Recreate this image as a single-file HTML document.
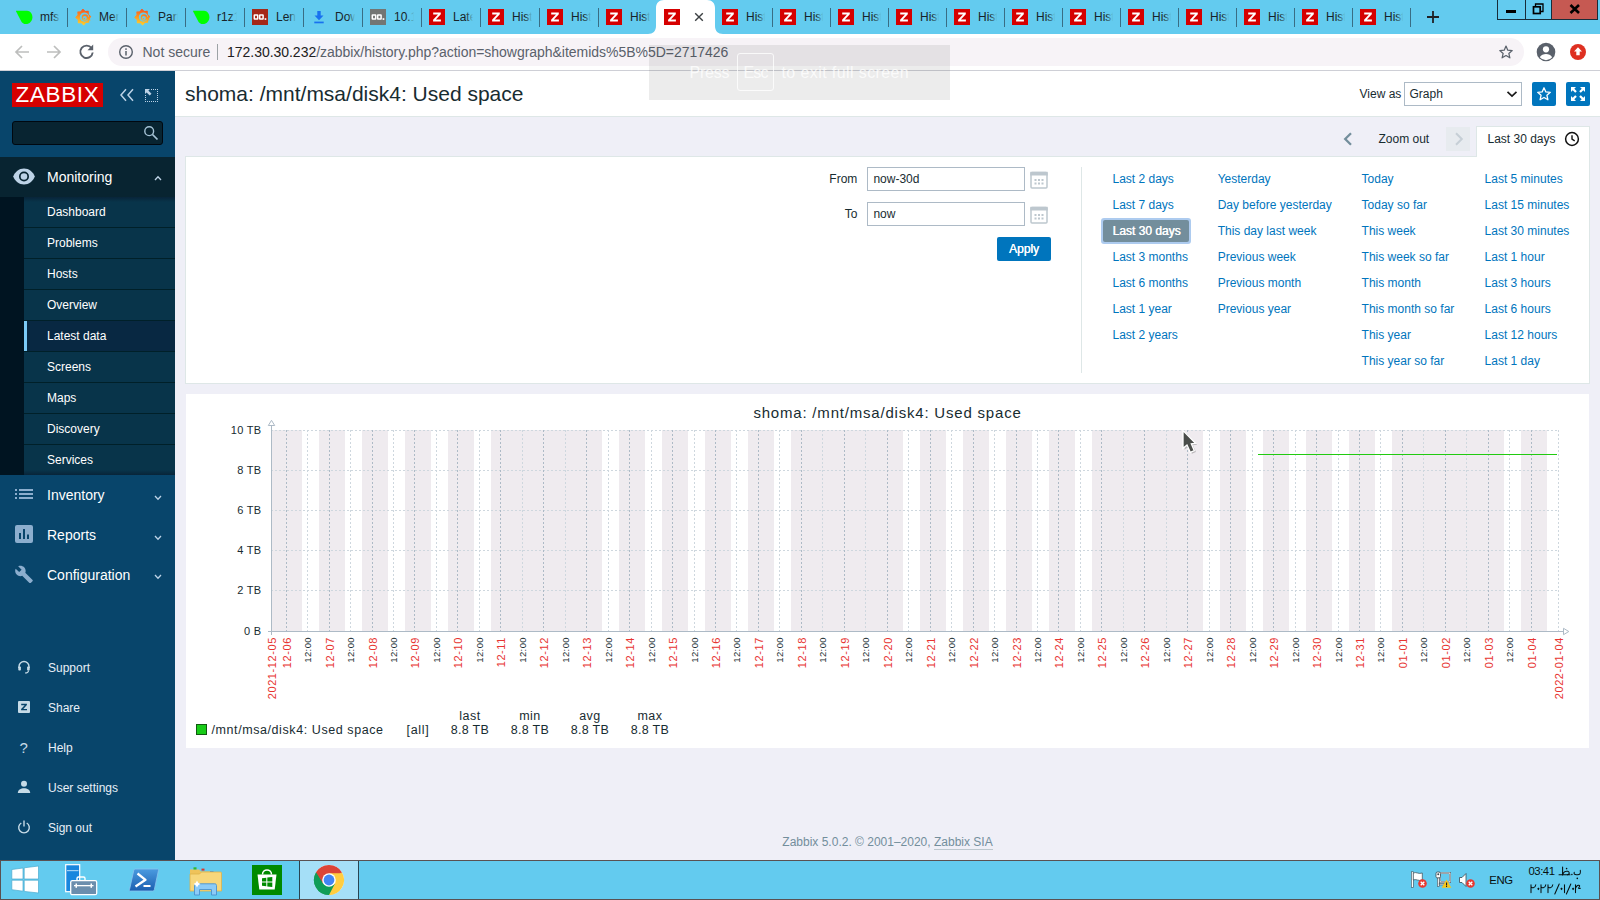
<!DOCTYPE html><html><head><meta charset="utf-8"><title>History [refreshed every 30 sec.]</title><style>html,body{margin:0;padding:0;width:1600px;height:900px;overflow:hidden;background:#fff;}body{font-family:"Liberation Sans",sans-serif;position:relative;}div,svg{position:absolute;}span{position:static;}</style></head><body><div style="left:175px;top:71px;width:1425px;height:789px;background:#EFEFF7"></div><div style="left:175px;top:71px;width:1425px;height:45px;background:#fff"></div><div style="left:175px;top:116px;width:1425px;height:1px;background:#DEE7E7"></div><div style="left:185px;top:79.82px;font-size:21px;line-height:27px;color:#182C31;font-weight:400;white-space:pre;">shoma: /mnt/msa/disk4: Used space</div><div style="left:1359.5px;top:85.54px;font-size:12px;line-height:16px;color:#182C31;font-weight:400;white-space:pre;">View as</div><div style="left:1404px;top:82px;width:118px;height:24px;background:#fff;border:1px solid #ADBAC6;box-sizing:border-box"></div><div style="left:1409.5px;top:85.54px;font-size:12px;line-height:16px;color:#182C31;font-weight:400;white-space:pre;">Graph</div><svg style="left:1506px;top:90px" width="12" height="8" viewBox="0 0 12 8"><path d="M1.500 1.800L6 6l4.500-4.200" fill="none" stroke="#1a1a1a" stroke-width="1.700"/></svg><div style="left:1532px;top:82px;width:24px;height:24px;background:#0075BD;border-radius:2px"></div><svg style="left:1536px;top:86px" width="16" height="16" viewBox="0 0 16 16"><path d="M8 1.800l1.850 4.100 4.450.45-3.350 3 .95 4.400L8 11.500l-3.900 2.250.95-4.400-3.350-3 4.450-.45z" fill="none" stroke="#fff" stroke-width="1.300" stroke-linejoin="round"/></svg><div style="left:1566px;top:82px;width:24px;height:24px;background:#0075BD;border-radius:2px"></div><svg style="left:1570px;top:86px" width="16" height="16" viewBox="0 0 16 16"><g fill="#fff"><path d="M1 1h5L4.300 2.700 6.800 5.200 5.200 6.800 2.700 4.300 1 6z"/><path d="M15 1v5l-1.700-1.700-2.500 2.500-1.600-1.600 2.500-2.500L10 1z"/><path d="M1 15v-5l1.700 1.700 2.500-2.500 1.600 1.600-2.500 2.500L6 15z"/><path d="M15 15h-5l1.700-1.700-2.500-2.500 1.600-1.600 2.500 2.500L15 10z"/></g></svg><svg style="left:1343px;top:132px" width="10" height="14" viewBox="0 0 10 14"><path d="M8 1.200L2.200 7 8 12.800" fill="none" stroke="#738E9C" stroke-width="2.300"/></svg><div style="left:1378.5px;top:130.54px;font-size:12px;line-height:16px;color:#182C31;font-weight:400;white-space:pre;">Zoom out</div><div style="left:1446px;top:127px;width:24px;height:24px;background:#E7EBEF"></div><svg style="left:1454px;top:132px" width="10" height="14" viewBox="0 0 10 14"><path d="M2 1.200L7.800 7 2 12.800" fill="none" stroke="#C6CFD6" stroke-width="2"/></svg><div style="left:1476px;top:126px;width:114px;height:32px;background:#fff;border:1px solid #DEE7E7;border-bottom:none;box-sizing:border-box"></div><div style="left:1487.5px;top:130.54px;font-size:12px;line-height:16px;color:#182C31;font-weight:400;white-space:pre;">Last 30 days</div><svg style="left:1564px;top:131px" width="16" height="16" viewBox="0 0 16 16"><circle cx="8" cy="8" r="6.400" fill="none" stroke="#111" stroke-width="1.500"/><path d="M8 4.200V8.200l2.700 1.700" fill="none" stroke="#111" stroke-width="1.400"/></svg><div style="left:185px;top:156px;width:1405px;height:228px;background:#fff;border:1px solid #DEE7E7;box-sizing:border-box"></div><div style="left:1477px;top:156px;width:112px;height:1px;background:#fff"></div><div style="right:742.7px;top:170.64px;font-size:12px;line-height:16px;color:#182C31;font-weight:400;white-space:pre;">From</div><div style="right:742.7px;top:206.24px;font-size:12px;line-height:16px;color:#182C31;font-weight:400;white-space:pre;">To</div><div style="left:867px;top:167px;width:158px;height:24px;background:#fff;border:1px solid #ADBAC6;box-sizing:border-box"></div><div style="left:873.4px;top:170.64px;font-size:12px;line-height:16px;color:#182C31;font-weight:400;white-space:pre;">now-30d</div><svg style="left:1030px;top:171px" width="18" height="18" viewBox="0 0 18 18"><rect x="1" y="1.500" width="16" height="15.500" rx="1" fill="#fff" stroke="#BDC7CE" stroke-width="1.500"/><rect x="0.300" y="0.800" width="17.400" height="3.700" fill="#BDC7CE"/><g fill="#BDC7CE"><rect x="4.500" y="8" width="2" height="2"/><rect x="8" y="8" width="2" height="2"/><rect x="11.500" y="8" width="2" height="2"/><rect x="4.500" y="11.500" width="2" height="2"/><rect x="8" y="11.500" width="2" height="2"/><rect x="11.500" y="11.500" width="2" height="2"/></g></svg><div style="left:867px;top:202px;width:158px;height:24px;background:#fff;border:1px solid #ADBAC6;box-sizing:border-box"></div><div style="left:873.4px;top:205.64px;font-size:12px;line-height:16px;color:#182C31;font-weight:400;white-space:pre;">now</div><svg style="left:1030px;top:206px" width="18" height="18" viewBox="0 0 18 18"><rect x="1" y="1.500" width="16" height="15.500" rx="1" fill="#fff" stroke="#BDC7CE" stroke-width="1.500"/><rect x="0.300" y="0.800" width="17.400" height="3.700" fill="#BDC7CE"/><g fill="#BDC7CE"><rect x="4.500" y="8" width="2" height="2"/><rect x="8" y="8" width="2" height="2"/><rect x="11.500" y="8" width="2" height="2"/><rect x="4.500" y="11.500" width="2" height="2"/><rect x="8" y="11.500" width="2" height="2"/><rect x="11.500" y="11.500" width="2" height="2"/></g></svg><div style="left:997px;top:237px;width:54px;height:24px;background:#0075BD;border-radius:2px"></div><div style="left:524px;width:1000px;text-align:center;top:240.64px;font-size:12px;line-height:16px;color:#fff;font-weight:400;white-space:pre;text-shadow:0.300px 0 0 #fff">Apply</div><div style="left:1081px;top:167px;width:1px;height:206px;background:#DEE7E7"></div><div style="left:1112.5px;top:170.84px;font-size:12px;line-height:16px;color:#0075BD;font-weight:400;white-space:pre;">Last 2 days</div><div style="left:1112.5px;top:196.84px;font-size:12px;line-height:16px;color:#0075BD;font-weight:400;white-space:pre;">Last 7 days</div><div style="left:1101px;top:218px;width:90px;height:26px;background:#ADCBEF;border-radius:3px"></div><div style="left:1103px;top:220px;width:86px;height:22px;background:#738E9C;border-radius:2px"></div><div style="left:1112.5px;top:222.84px;font-size:12px;line-height:16px;color:#fff;font-weight:400;white-space:pre;text-shadow:0.400px 0 0 #fff">Last 30 days</div><div style="left:1112.5px;top:248.84px;font-size:12px;line-height:16px;color:#0075BD;font-weight:400;white-space:pre;">Last 3 months</div><div style="left:1112.5px;top:274.84px;font-size:12px;line-height:16px;color:#0075BD;font-weight:400;white-space:pre;">Last 6 months</div><div style="left:1112.5px;top:300.84px;font-size:12px;line-height:16px;color:#0075BD;font-weight:400;white-space:pre;">Last 1 year</div><div style="left:1112.5px;top:326.84px;font-size:12px;line-height:16px;color:#0075BD;font-weight:400;white-space:pre;">Last 2 years</div><div style="left:1217.7px;top:170.84px;font-size:12px;line-height:16px;color:#0075BD;font-weight:400;white-space:pre;">Yesterday</div><div style="left:1217.7px;top:196.84px;font-size:12px;line-height:16px;color:#0075BD;font-weight:400;white-space:pre;">Day before yesterday</div><div style="left:1217.7px;top:222.84px;font-size:12px;line-height:16px;color:#0075BD;font-weight:400;white-space:pre;">This day last week</div><div style="left:1217.7px;top:248.84px;font-size:12px;line-height:16px;color:#0075BD;font-weight:400;white-space:pre;">Previous week</div><div style="left:1217.7px;top:274.84px;font-size:12px;line-height:16px;color:#0075BD;font-weight:400;white-space:pre;">Previous month</div><div style="left:1217.7px;top:300.84px;font-size:12px;line-height:16px;color:#0075BD;font-weight:400;white-space:pre;">Previous year</div><div style="left:1361.6px;top:170.84px;font-size:12px;line-height:16px;color:#0075BD;font-weight:400;white-space:pre;">Today</div><div style="left:1361.6px;top:196.84px;font-size:12px;line-height:16px;color:#0075BD;font-weight:400;white-space:pre;">Today so far</div><div style="left:1361.6px;top:222.84px;font-size:12px;line-height:16px;color:#0075BD;font-weight:400;white-space:pre;">This week</div><div style="left:1361.6px;top:248.84px;font-size:12px;line-height:16px;color:#0075BD;font-weight:400;white-space:pre;">This week so far</div><div style="left:1361.6px;top:274.84px;font-size:12px;line-height:16px;color:#0075BD;font-weight:400;white-space:pre;">This month</div><div style="left:1361.6px;top:300.84px;font-size:12px;line-height:16px;color:#0075BD;font-weight:400;white-space:pre;">This month so far</div><div style="left:1361.6px;top:326.84px;font-size:12px;line-height:16px;color:#0075BD;font-weight:400;white-space:pre;">This year</div><div style="left:1361.6px;top:352.84px;font-size:12px;line-height:16px;color:#0075BD;font-weight:400;white-space:pre;">This year so far</div><div style="left:1484.6px;top:170.84px;font-size:12px;line-height:16px;color:#0075BD;font-weight:400;white-space:pre;">Last 5 minutes</div><div style="left:1484.6px;top:196.84px;font-size:12px;line-height:16px;color:#0075BD;font-weight:400;white-space:pre;">Last 15 minutes</div><div style="left:1484.6px;top:222.84px;font-size:12px;line-height:16px;color:#0075BD;font-weight:400;white-space:pre;">Last 30 minutes</div><div style="left:1484.6px;top:248.84px;font-size:12px;line-height:16px;color:#0075BD;font-weight:400;white-space:pre;">Last 1 hour</div><div style="left:1484.6px;top:274.84px;font-size:12px;line-height:16px;color:#0075BD;font-weight:400;white-space:pre;">Last 3 hours</div><div style="left:1484.6px;top:300.84px;font-size:12px;line-height:16px;color:#0075BD;font-weight:400;white-space:pre;">Last 6 hours</div><div style="left:1484.6px;top:326.84px;font-size:12px;line-height:16px;color:#0075BD;font-weight:400;white-space:pre;">Last 12 hours</div><div style="left:1484.6px;top:352.84px;font-size:12px;line-height:16px;color:#0075BD;font-weight:400;white-space:pre;">Last 1 day</div><div style="left:186px;top:394px;width:1403px;height:354px;background:#fff"></div><svg style="left:0;top:0" width="1600" height="900" viewBox="0 0 1600 900" shape-rendering="crispEdges"><rect x="272" y="430" width="1287" height="201" fill="#EFEBEF"/><rect x="302" y="430" width="17" height="201" fill="#fff"/><rect x="345" y="430" width="17" height="201" fill="#fff"/><rect x="388" y="430" width="17" height="201" fill="#fff"/><rect x="431" y="430" width="17" height="201" fill="#fff"/><rect x="474" y="430" width="17" height="201" fill="#fff"/><rect x="602" y="430" width="17" height="201" fill="#fff"/><rect x="645" y="430" width="17" height="201" fill="#fff"/><rect x="688" y="430" width="17" height="201" fill="#fff"/><rect x="731" y="430" width="17" height="201" fill="#fff"/><rect x="774" y="430" width="17" height="201" fill="#fff"/><rect x="903" y="430" width="17" height="201" fill="#fff"/><rect x="946" y="430" width="17" height="201" fill="#fff"/><rect x="989" y="430" width="17" height="201" fill="#fff"/><rect x="1032" y="430" width="17" height="201" fill="#fff"/><rect x="1075" y="430" width="17" height="201" fill="#fff"/><rect x="1203" y="430" width="17" height="201" fill="#fff"/><rect x="1246" y="430" width="17" height="201" fill="#fff"/><rect x="1289" y="430" width="17" height="201" fill="#fff"/><rect x="1332" y="430" width="17" height="201" fill="#fff"/><rect x="1375" y="430" width="17" height="201" fill="#fff"/><rect x="1504" y="430" width="17" height="201" fill="#fff"/><rect x="1547" y="430" width="12" height="201" fill="#fff"/><path d="M271 430.5H1559" stroke="#CED7DE" stroke-dasharray="2 2"/><path d="M271 470.5H1559" stroke="#CED7DE" stroke-dasharray="2 2"/><path d="M271 510.5H1559" stroke="#CED7DE" stroke-dasharray="2 2"/><path d="M271 550.5H1559" stroke="#CED7DE" stroke-dasharray="2 2"/><path d="M271 590.5H1559" stroke="#CED7DE" stroke-dasharray="2 2"/><path d="M286.5 430V631" stroke="#ADBAC6" stroke-dasharray="2 2"/><path d="M307.5 430V631" stroke="#CED7DE" stroke-dasharray="2 2"/><path d="M329.5 430V631" stroke="#ADBAC6" stroke-dasharray="2 2"/><path d="M350.5 430V631" stroke="#CED7DE" stroke-dasharray="2 2"/><path d="M372.5 430V631" stroke="#ADBAC6" stroke-dasharray="2 2"/><path d="M393.5 430V631" stroke="#CED7DE" stroke-dasharray="2 2"/><path d="M414.5 430V631" stroke="#ADBAC6" stroke-dasharray="2 2"/><path d="M436.5 430V631" stroke="#CED7DE" stroke-dasharray="2 2"/><path d="M457.5 430V631" stroke="#ADBAC6" stroke-dasharray="2 2"/><path d="M479.5 430V631" stroke="#CED7DE" stroke-dasharray="2 2"/><path d="M500.5 430V631" stroke="#ADBAC6" stroke-dasharray="2 2"/><path d="M522.5 430V631" stroke="#CED7DE" stroke-dasharray="2 2"/><path d="M543.5 430V631" stroke="#ADBAC6" stroke-dasharray="2 2"/><path d="M565.5 430V631" stroke="#CED7DE" stroke-dasharray="2 2"/><path d="M586.5 430V631" stroke="#ADBAC6" stroke-dasharray="2 2"/><path d="M608.5 430V631" stroke="#CED7DE" stroke-dasharray="2 2"/><path d="M629.5 430V631" stroke="#ADBAC6" stroke-dasharray="2 2"/><path d="M651.5 430V631" stroke="#CED7DE" stroke-dasharray="2 2"/><path d="M672.5 430V631" stroke="#ADBAC6" stroke-dasharray="2 2"/><path d="M694.5 430V631" stroke="#CED7DE" stroke-dasharray="2 2"/><path d="M715.5 430V631" stroke="#ADBAC6" stroke-dasharray="2 2"/><path d="M736.5 430V631" stroke="#CED7DE" stroke-dasharray="2 2"/><path d="M758.5 430V631" stroke="#ADBAC6" stroke-dasharray="2 2"/><path d="M779.5 430V631" stroke="#CED7DE" stroke-dasharray="2 2"/><path d="M801.5 430V631" stroke="#ADBAC6" stroke-dasharray="2 2"/><path d="M822.5 430V631" stroke="#CED7DE" stroke-dasharray="2 2"/><path d="M844.5 430V631" stroke="#ADBAC6" stroke-dasharray="2 2"/><path d="M865.5 430V631" stroke="#CED7DE" stroke-dasharray="2 2"/><path d="M887.5 430V631" stroke="#ADBAC6" stroke-dasharray="2 2"/><path d="M908.5 430V631" stroke="#CED7DE" stroke-dasharray="2 2"/><path d="M930.5 430V631" stroke="#ADBAC6" stroke-dasharray="2 2"/><path d="M951.5 430V631" stroke="#CED7DE" stroke-dasharray="2 2"/><path d="M973.5 430V631" stroke="#ADBAC6" stroke-dasharray="2 2"/><path d="M994.5 430V631" stroke="#CED7DE" stroke-dasharray="2 2"/><path d="M1016.5 430V631" stroke="#ADBAC6" stroke-dasharray="2 2"/><path d="M1037.5 430V631" stroke="#CED7DE" stroke-dasharray="2 2"/><path d="M1058.5 430V631" stroke="#ADBAC6" stroke-dasharray="2 2"/><path d="M1080.5 430V631" stroke="#CED7DE" stroke-dasharray="2 2"/><path d="M1101.5 430V631" stroke="#ADBAC6" stroke-dasharray="2 2"/><path d="M1123.5 430V631" stroke="#CED7DE" stroke-dasharray="2 2"/><path d="M1144.5 430V631" stroke="#ADBAC6" stroke-dasharray="2 2"/><path d="M1166.5 430V631" stroke="#CED7DE" stroke-dasharray="2 2"/><path d="M1187.5 430V631" stroke="#ADBAC6" stroke-dasharray="2 2"/><path d="M1209.5 430V631" stroke="#CED7DE" stroke-dasharray="2 2"/><path d="M1230.5 430V631" stroke="#ADBAC6" stroke-dasharray="2 2"/><path d="M1252.5 430V631" stroke="#CED7DE" stroke-dasharray="2 2"/><path d="M1273.5 430V631" stroke="#ADBAC6" stroke-dasharray="2 2"/><path d="M1295.5 430V631" stroke="#CED7DE" stroke-dasharray="2 2"/><path d="M1316.5 430V631" stroke="#ADBAC6" stroke-dasharray="2 2"/><path d="M1338.5 430V631" stroke="#CED7DE" stroke-dasharray="2 2"/><path d="M1359.5 430V631" stroke="#ADBAC6" stroke-dasharray="2 2"/><path d="M1380.5 430V631" stroke="#CED7DE" stroke-dasharray="2 2"/><path d="M1402.5 430V631" stroke="#ADBAC6" stroke-dasharray="2 2"/><path d="M1423.5 430V631" stroke="#CED7DE" stroke-dasharray="2 2"/><path d="M1445.5 430V631" stroke="#ADBAC6" stroke-dasharray="2 2"/><path d="M1466.5 430V631" stroke="#CED7DE" stroke-dasharray="2 2"/><path d="M1488.5 430V631" stroke="#ADBAC6" stroke-dasharray="2 2"/><path d="M1509.5 430V631" stroke="#CED7DE" stroke-dasharray="2 2"/><path d="M1531.5 430V631" stroke="#ADBAC6" stroke-dasharray="2 2"/><path d="M1558.5 430V631" stroke="#CED7DE" stroke-dasharray="2 2"/><path d="M271.500 425V635" stroke="#ADBAC6"/><path d="M268 631.500H1563" stroke="#ADBAC6"/><path d="M268.300 425.500L271.500 420.300L274.700 425.500z" fill="#fff" stroke="#ADBAC6" shape-rendering="geometricPrecision"/><path d="M1563.500 628.300L1568.800 631.500L1563.500 634.700z" fill="#fff" stroke="#ADBAC6" shape-rendering="geometricPrecision"/><path d="M1258 454.500H1557" stroke="#21CB10" stroke-width="1.700"/></svg><div style="left:387.5px;width:1000px;text-align:center;top:403.00px;font-size:15px;line-height:20px;color:#182C31;font-weight:400;white-space:pre;letter-spacing:0.800px">shoma: /mnt/msa/disk4: Used space</div><div style="right:1338.5px;top:423.19px;font-size:11px;line-height:14px;color:#182C31;font-weight:400;white-space:pre;letter-spacing:0.300px">10 TB</div><div style="right:1338.5px;top:463.19px;font-size:11px;line-height:14px;color:#182C31;font-weight:400;white-space:pre;letter-spacing:0.300px">8 TB</div><div style="right:1338.5px;top:503.19px;font-size:11px;line-height:14px;color:#182C31;font-weight:400;white-space:pre;letter-spacing:0.300px">6 TB</div><div style="right:1338.5px;top:543.19px;font-size:11px;line-height:14px;color:#182C31;font-weight:400;white-space:pre;letter-spacing:0.300px">4 TB</div><div style="right:1338.5px;top:583.19px;font-size:11px;line-height:14px;color:#182C31;font-weight:400;white-space:pre;letter-spacing:0.300px">2 TB</div><div style="right:1338.5px;top:623.69px;font-size:11px;line-height:14px;color:#182C31;font-weight:400;white-space:pre;letter-spacing:0.300px">0 B</div><div style="left:271.5px;top:637px;width:0;height:0;transform:rotate(-90deg);"><div style="right:0;top:-7.15px;font-size:11px;line-height:14.30px;color:#E73431;white-space:pre;letter-spacing:0.6px">2021-12-05</div></div><div style="left:286.5px;top:637px;width:0;height:0;transform:rotate(-90deg);"><div style="right:0;top:-7.15px;font-size:11px;line-height:14.30px;color:#E73431;white-space:pre;letter-spacing:0.6px">12-06</div></div><div style="left:307.5px;top:637px;width:0;height:0;transform:rotate(-90deg);"><div style="right:0;top:-6.17px;font-size:9.5px;line-height:12.35px;color:#182C31;white-space:pre;letter-spacing:0.4px">12:00</div></div><div style="left:329.5px;top:637px;width:0;height:0;transform:rotate(-90deg);"><div style="right:0;top:-7.15px;font-size:11px;line-height:14.30px;color:#E73431;white-space:pre;letter-spacing:0.6px">12-07</div></div><div style="left:350.5px;top:637px;width:0;height:0;transform:rotate(-90deg);"><div style="right:0;top:-6.17px;font-size:9.5px;line-height:12.35px;color:#182C31;white-space:pre;letter-spacing:0.4px">12:00</div></div><div style="left:372.5px;top:637px;width:0;height:0;transform:rotate(-90deg);"><div style="right:0;top:-7.15px;font-size:11px;line-height:14.30px;color:#E73431;white-space:pre;letter-spacing:0.6px">12-08</div></div><div style="left:393.5px;top:637px;width:0;height:0;transform:rotate(-90deg);"><div style="right:0;top:-6.17px;font-size:9.5px;line-height:12.35px;color:#182C31;white-space:pre;letter-spacing:0.4px">12:00</div></div><div style="left:414.5px;top:637px;width:0;height:0;transform:rotate(-90deg);"><div style="right:0;top:-7.15px;font-size:11px;line-height:14.30px;color:#E73431;white-space:pre;letter-spacing:0.6px">12-09</div></div><div style="left:436.5px;top:637px;width:0;height:0;transform:rotate(-90deg);"><div style="right:0;top:-6.17px;font-size:9.5px;line-height:12.35px;color:#182C31;white-space:pre;letter-spacing:0.4px">12:00</div></div><div style="left:457.5px;top:637px;width:0;height:0;transform:rotate(-90deg);"><div style="right:0;top:-7.15px;font-size:11px;line-height:14.30px;color:#E73431;white-space:pre;letter-spacing:0.6px">12-10</div></div><div style="left:479.5px;top:637px;width:0;height:0;transform:rotate(-90deg);"><div style="right:0;top:-6.17px;font-size:9.5px;line-height:12.35px;color:#182C31;white-space:pre;letter-spacing:0.4px">12:00</div></div><div style="left:500.5px;top:637px;width:0;height:0;transform:rotate(-90deg);"><div style="right:0;top:-7.15px;font-size:11px;line-height:14.30px;color:#E73431;white-space:pre;letter-spacing:0.6px">12-11</div></div><div style="left:522.5px;top:637px;width:0;height:0;transform:rotate(-90deg);"><div style="right:0;top:-6.17px;font-size:9.5px;line-height:12.35px;color:#182C31;white-space:pre;letter-spacing:0.4px">12:00</div></div><div style="left:543.5px;top:637px;width:0;height:0;transform:rotate(-90deg);"><div style="right:0;top:-7.15px;font-size:11px;line-height:14.30px;color:#E73431;white-space:pre;letter-spacing:0.6px">12-12</div></div><div style="left:565.5px;top:637px;width:0;height:0;transform:rotate(-90deg);"><div style="right:0;top:-6.17px;font-size:9.5px;line-height:12.35px;color:#182C31;white-space:pre;letter-spacing:0.4px">12:00</div></div><div style="left:586.5px;top:637px;width:0;height:0;transform:rotate(-90deg);"><div style="right:0;top:-7.15px;font-size:11px;line-height:14.30px;color:#E73431;white-space:pre;letter-spacing:0.6px">12-13</div></div><div style="left:608.5px;top:637px;width:0;height:0;transform:rotate(-90deg);"><div style="right:0;top:-6.17px;font-size:9.5px;line-height:12.35px;color:#182C31;white-space:pre;letter-spacing:0.4px">12:00</div></div><div style="left:629.5px;top:637px;width:0;height:0;transform:rotate(-90deg);"><div style="right:0;top:-7.15px;font-size:11px;line-height:14.30px;color:#E73431;white-space:pre;letter-spacing:0.6px">12-14</div></div><div style="left:651.5px;top:637px;width:0;height:0;transform:rotate(-90deg);"><div style="right:0;top:-6.17px;font-size:9.5px;line-height:12.35px;color:#182C31;white-space:pre;letter-spacing:0.4px">12:00</div></div><div style="left:672.5px;top:637px;width:0;height:0;transform:rotate(-90deg);"><div style="right:0;top:-7.15px;font-size:11px;line-height:14.30px;color:#E73431;white-space:pre;letter-spacing:0.6px">12-15</div></div><div style="left:694.5px;top:637px;width:0;height:0;transform:rotate(-90deg);"><div style="right:0;top:-6.17px;font-size:9.5px;line-height:12.35px;color:#182C31;white-space:pre;letter-spacing:0.4px">12:00</div></div><div style="left:715.5px;top:637px;width:0;height:0;transform:rotate(-90deg);"><div style="right:0;top:-7.15px;font-size:11px;line-height:14.30px;color:#E73431;white-space:pre;letter-spacing:0.6px">12-16</div></div><div style="left:736.5px;top:637px;width:0;height:0;transform:rotate(-90deg);"><div style="right:0;top:-6.17px;font-size:9.5px;line-height:12.35px;color:#182C31;white-space:pre;letter-spacing:0.4px">12:00</div></div><div style="left:758.5px;top:637px;width:0;height:0;transform:rotate(-90deg);"><div style="right:0;top:-7.15px;font-size:11px;line-height:14.30px;color:#E73431;white-space:pre;letter-spacing:0.6px">12-17</div></div><div style="left:779.5px;top:637px;width:0;height:0;transform:rotate(-90deg);"><div style="right:0;top:-6.17px;font-size:9.5px;line-height:12.35px;color:#182C31;white-space:pre;letter-spacing:0.4px">12:00</div></div><div style="left:801.5px;top:637px;width:0;height:0;transform:rotate(-90deg);"><div style="right:0;top:-7.15px;font-size:11px;line-height:14.30px;color:#E73431;white-space:pre;letter-spacing:0.6px">12-18</div></div><div style="left:822.5px;top:637px;width:0;height:0;transform:rotate(-90deg);"><div style="right:0;top:-6.17px;font-size:9.5px;line-height:12.35px;color:#182C31;white-space:pre;letter-spacing:0.4px">12:00</div></div><div style="left:844.5px;top:637px;width:0;height:0;transform:rotate(-90deg);"><div style="right:0;top:-7.15px;font-size:11px;line-height:14.30px;color:#E73431;white-space:pre;letter-spacing:0.6px">12-19</div></div><div style="left:865.5px;top:637px;width:0;height:0;transform:rotate(-90deg);"><div style="right:0;top:-6.17px;font-size:9.5px;line-height:12.35px;color:#182C31;white-space:pre;letter-spacing:0.4px">12:00</div></div><div style="left:887.5px;top:637px;width:0;height:0;transform:rotate(-90deg);"><div style="right:0;top:-7.15px;font-size:11px;line-height:14.30px;color:#E73431;white-space:pre;letter-spacing:0.6px">12-20</div></div><div style="left:908.5px;top:637px;width:0;height:0;transform:rotate(-90deg);"><div style="right:0;top:-6.17px;font-size:9.5px;line-height:12.35px;color:#182C31;white-space:pre;letter-spacing:0.4px">12:00</div></div><div style="left:930.5px;top:637px;width:0;height:0;transform:rotate(-90deg);"><div style="right:0;top:-7.15px;font-size:11px;line-height:14.30px;color:#E73431;white-space:pre;letter-spacing:0.6px">12-21</div></div><div style="left:951.5px;top:637px;width:0;height:0;transform:rotate(-90deg);"><div style="right:0;top:-6.17px;font-size:9.5px;line-height:12.35px;color:#182C31;white-space:pre;letter-spacing:0.4px">12:00</div></div><div style="left:973.5px;top:637px;width:0;height:0;transform:rotate(-90deg);"><div style="right:0;top:-7.15px;font-size:11px;line-height:14.30px;color:#E73431;white-space:pre;letter-spacing:0.6px">12-22</div></div><div style="left:994.5px;top:637px;width:0;height:0;transform:rotate(-90deg);"><div style="right:0;top:-6.17px;font-size:9.5px;line-height:12.35px;color:#182C31;white-space:pre;letter-spacing:0.4px">12:00</div></div><div style="left:1016.5px;top:637px;width:0;height:0;transform:rotate(-90deg);"><div style="right:0;top:-7.15px;font-size:11px;line-height:14.30px;color:#E73431;white-space:pre;letter-spacing:0.6px">12-23</div></div><div style="left:1037.5px;top:637px;width:0;height:0;transform:rotate(-90deg);"><div style="right:0;top:-6.17px;font-size:9.5px;line-height:12.35px;color:#182C31;white-space:pre;letter-spacing:0.4px">12:00</div></div><div style="left:1058.5px;top:637px;width:0;height:0;transform:rotate(-90deg);"><div style="right:0;top:-7.15px;font-size:11px;line-height:14.30px;color:#E73431;white-space:pre;letter-spacing:0.6px">12-24</div></div><div style="left:1080.5px;top:637px;width:0;height:0;transform:rotate(-90deg);"><div style="right:0;top:-6.17px;font-size:9.5px;line-height:12.35px;color:#182C31;white-space:pre;letter-spacing:0.4px">12:00</div></div><div style="left:1101.5px;top:637px;width:0;height:0;transform:rotate(-90deg);"><div style="right:0;top:-7.15px;font-size:11px;line-height:14.30px;color:#E73431;white-space:pre;letter-spacing:0.6px">12-25</div></div><div style="left:1123.5px;top:637px;width:0;height:0;transform:rotate(-90deg);"><div style="right:0;top:-6.17px;font-size:9.5px;line-height:12.35px;color:#182C31;white-space:pre;letter-spacing:0.4px">12:00</div></div><div style="left:1144.5px;top:637px;width:0;height:0;transform:rotate(-90deg);"><div style="right:0;top:-7.15px;font-size:11px;line-height:14.30px;color:#E73431;white-space:pre;letter-spacing:0.6px">12-26</div></div><div style="left:1166.5px;top:637px;width:0;height:0;transform:rotate(-90deg);"><div style="right:0;top:-6.17px;font-size:9.5px;line-height:12.35px;color:#182C31;white-space:pre;letter-spacing:0.4px">12:00</div></div><div style="left:1187.5px;top:637px;width:0;height:0;transform:rotate(-90deg);"><div style="right:0;top:-7.15px;font-size:11px;line-height:14.30px;color:#E73431;white-space:pre;letter-spacing:0.6px">12-27</div></div><div style="left:1209.5px;top:637px;width:0;height:0;transform:rotate(-90deg);"><div style="right:0;top:-6.17px;font-size:9.5px;line-height:12.35px;color:#182C31;white-space:pre;letter-spacing:0.4px">12:00</div></div><div style="left:1230.5px;top:637px;width:0;height:0;transform:rotate(-90deg);"><div style="right:0;top:-7.15px;font-size:11px;line-height:14.30px;color:#E73431;white-space:pre;letter-spacing:0.6px">12-28</div></div><div style="left:1252.5px;top:637px;width:0;height:0;transform:rotate(-90deg);"><div style="right:0;top:-6.17px;font-size:9.5px;line-height:12.35px;color:#182C31;white-space:pre;letter-spacing:0.4px">12:00</div></div><div style="left:1273.5px;top:637px;width:0;height:0;transform:rotate(-90deg);"><div style="right:0;top:-7.15px;font-size:11px;line-height:14.30px;color:#E73431;white-space:pre;letter-spacing:0.6px">12-29</div></div><div style="left:1295.5px;top:637px;width:0;height:0;transform:rotate(-90deg);"><div style="right:0;top:-6.17px;font-size:9.5px;line-height:12.35px;color:#182C31;white-space:pre;letter-spacing:0.4px">12:00</div></div><div style="left:1316.5px;top:637px;width:0;height:0;transform:rotate(-90deg);"><div style="right:0;top:-7.15px;font-size:11px;line-height:14.30px;color:#E73431;white-space:pre;letter-spacing:0.6px">12-30</div></div><div style="left:1338.5px;top:637px;width:0;height:0;transform:rotate(-90deg);"><div style="right:0;top:-6.17px;font-size:9.5px;line-height:12.35px;color:#182C31;white-space:pre;letter-spacing:0.4px">12:00</div></div><div style="left:1359.5px;top:637px;width:0;height:0;transform:rotate(-90deg);"><div style="right:0;top:-7.15px;font-size:11px;line-height:14.30px;color:#E73431;white-space:pre;letter-spacing:0.6px">12-31</div></div><div style="left:1380.5px;top:637px;width:0;height:0;transform:rotate(-90deg);"><div style="right:0;top:-6.17px;font-size:9.5px;line-height:12.35px;color:#182C31;white-space:pre;letter-spacing:0.4px">12:00</div></div><div style="left:1402.5px;top:637px;width:0;height:0;transform:rotate(-90deg);"><div style="right:0;top:-7.15px;font-size:11px;line-height:14.30px;color:#E73431;white-space:pre;letter-spacing:0.6px">01-01</div></div><div style="left:1423.5px;top:637px;width:0;height:0;transform:rotate(-90deg);"><div style="right:0;top:-6.17px;font-size:9.5px;line-height:12.35px;color:#182C31;white-space:pre;letter-spacing:0.4px">12:00</div></div><div style="left:1445.5px;top:637px;width:0;height:0;transform:rotate(-90deg);"><div style="right:0;top:-7.15px;font-size:11px;line-height:14.30px;color:#E73431;white-space:pre;letter-spacing:0.6px">01-02</div></div><div style="left:1466.5px;top:637px;width:0;height:0;transform:rotate(-90deg);"><div style="right:0;top:-6.17px;font-size:9.5px;line-height:12.35px;color:#182C31;white-space:pre;letter-spacing:0.4px">12:00</div></div><div style="left:1488.5px;top:637px;width:0;height:0;transform:rotate(-90deg);"><div style="right:0;top:-7.15px;font-size:11px;line-height:14.30px;color:#E73431;white-space:pre;letter-spacing:0.6px">01-03</div></div><div style="left:1509.5px;top:637px;width:0;height:0;transform:rotate(-90deg);"><div style="right:0;top:-6.17px;font-size:9.5px;line-height:12.35px;color:#182C31;white-space:pre;letter-spacing:0.4px">12:00</div></div><div style="left:1531.5px;top:637px;width:0;height:0;transform:rotate(-90deg);"><div style="right:0;top:-7.15px;font-size:11px;line-height:14.30px;color:#E73431;white-space:pre;letter-spacing:0.6px">01-04</div></div><div style="left:1558.5px;top:637px;width:0;height:0;transform:rotate(-90deg);"><div style="right:0;top:-7.15px;font-size:11px;line-height:14.30px;color:#E73431;white-space:pre;letter-spacing:0.6px">2022-01-04</div></div><div style="left:196px;top:724px;width:11px;height:11px;background:#18CB18;border:1px solid #105910;box-sizing:border-box"></div><div style="left:211.5px;top:722.17px;font-size:12.5px;line-height:16px;color:#182C31;font-weight:400;white-space:pre;letter-spacing:0.580px">/mnt/msa/disk4: Used space</div><div style="left:406.5px;top:722.17px;font-size:12.5px;line-height:16px;color:#182C31;font-weight:400;white-space:pre;letter-spacing:0.700px">[all]</div><div style="left:-30px;width:1000px;text-align:center;top:708.07px;font-size:12.5px;line-height:16px;color:#182C31;font-weight:400;white-space:pre;letter-spacing:0.500px">last</div><div style="left:-30px;width:1000px;text-align:center;top:722.17px;font-size:12.5px;line-height:16px;color:#182C31;font-weight:400;white-space:pre;letter-spacing:0.300px">8.8 TB</div><div style="left:30px;width:1000px;text-align:center;top:708.07px;font-size:12.5px;line-height:16px;color:#182C31;font-weight:400;white-space:pre;letter-spacing:0.500px">min</div><div style="left:30px;width:1000px;text-align:center;top:722.17px;font-size:12.5px;line-height:16px;color:#182C31;font-weight:400;white-space:pre;letter-spacing:0.300px">8.8 TB</div><div style="left:90px;width:1000px;text-align:center;top:708.07px;font-size:12.5px;line-height:16px;color:#182C31;font-weight:400;white-space:pre;letter-spacing:0.500px">avg</div><div style="left:90px;width:1000px;text-align:center;top:722.17px;font-size:12.5px;line-height:16px;color:#182C31;font-weight:400;white-space:pre;letter-spacing:0.300px">8.8 TB</div><div style="left:150px;width:1000px;text-align:center;top:708.07px;font-size:12.5px;line-height:16px;color:#182C31;font-weight:400;white-space:pre;letter-spacing:0.500px">max</div><div style="left:150px;width:1000px;text-align:center;top:722.17px;font-size:12.5px;line-height:16px;color:#182C31;font-weight:400;white-space:pre;letter-spacing:0.300px">8.8 TB</div><div style="left:387.5px;width:1000px;text-align:center;top:834.14px;font-size:12px;line-height:16px;color:#738E9C;font-weight:400;white-space:pre;">Zabbix 5.0.2. © 2001–2020, Zabbix SIA</div><div style="left:934px;top:849px;width:59px;height:1px;background:#BDC7CE"></div><div style="left:0px;top:71px;width:175px;height:789px;background:#08456B"></div><div style="left:12px;top:83px;width:91px;height:24px;background:#D60000"></div><div style="left:15.6px;top:80.44px;font-size:22.4px;line-height:29px;color:#fff;font-weight:400;white-space:pre;letter-spacing:0.700px">ZABBIX</div><svg style="left:119px;top:88px" width="16" height="14" viewBox="0 0 16 14"><path d="M7 1.300L2 7l5 5.700M14 1.300L9 7l5 5.700" fill="none" stroke="#BDD3E7" stroke-width="1.500"/></svg><svg style="left:145px;top:89px" width="13" height="13" viewBox="0 0 13 13" shape-rendering="crispEdges"><g fill="#BDD3E7"><rect x="12" y="4" width="1" height="1"/><rect x="6" y="12" width="1" height="1"/><rect x="12" y="10" width="1" height="1"/><rect x="4" y="12" width="1" height="1"/><rect x="8" y="0" width="1" height="1"/><rect x="10" y="0" width="1" height="1"/><rect x="8" y="12" width="1" height="1"/><rect x="0" y="8" width="1" height="1"/><rect x="10" y="12" width="1" height="1"/><rect x="12" y="0" width="1" height="1"/><rect x="12" y="6" width="1" height="1"/><rect x="12" y="12" width="1" height="1"/><rect x="0" y="10" width="1" height="1"/><rect x="12" y="2" width="1" height="1"/><rect x="12" y="8" width="1" height="1"/><rect x="0" y="6" width="1" height="1"/><rect x="0" y="12" width="1" height="1"/><rect x="2" y="12" width="1" height="1"/><rect x="6" y="0" width="1" height="1"/></g><g shape-rendering="auto"><path d="M0 0H5L3.400 1.600 6.500 4.700 4.700 6.500 1.600 3.400 0 5z" fill="#BDD3E7"/></g></svg><div style="left:12px;top:121px;width:151px;height:24px;background:#082431;border:1px solid #000810;border-radius:3px;box-sizing:border-box"></div><svg style="left:143px;top:125px" width="16" height="16" viewBox="0 0 16 16"><circle cx="6.200" cy="6.200" r="4.400" fill="none" stroke="#A5C3D6" stroke-width="1.400"/><path d="M9.500 9.500l5 5" stroke="#A5C3D6" stroke-width="1.700"/></svg><div style="left:0px;top:157px;width:175px;height:40px;background:#082431"></div><svg style="left:13px;top:167.500px" width="22" height="17" viewBox="0 0 22 17"><path d="M11 0.500C6 0.500 2 3.800 0.200 8.500 2 13.200 6 16.500 11 16.500s9-3.300 10.800-8C20 3.800 16 0.500 11 0.500z" fill="#BDD3E7"/><circle cx="11" cy="8.500" r="5" fill="#082431"/><circle cx="11" cy="8.500" r="3.300" fill="#BDD3E7"/></svg><div style="left:47px;top:167.95px;font-size:14px;line-height:18px;color:#fff;font-weight:400;white-space:pre;">Monitoring</div><svg style="left:154px;top:175px" width="8" height="6" viewBox="0 0 8 6"><path d="M1 5l3-3.200L7 5" fill="none" stroke="#BDD3E7" stroke-width="1.300"/></svg><div style="left:0px;top:197px;width:175px;height:278px;background:#001421"></div><div style="left:24px;top:197px;width:151px;height:278px;background:#08344A"></div><div style="left:24px;top:197px;width:151px;height:5px;background:linear-gradient(180deg,#082439,#08344A)"></div><div style="left:24px;top:227px;width:151px;height:1px;background:#002029"></div><div style="left:47px;top:204.14px;font-size:12px;line-height:16px;color:#fff;font-weight:400;white-space:pre;">Dashboard</div><div style="left:24px;top:258px;width:151px;height:1px;background:#002029"></div><div style="left:47px;top:235.14px;font-size:12px;line-height:16px;color:#fff;font-weight:400;white-space:pre;">Problems</div><div style="left:24px;top:289px;width:151px;height:1px;background:#002029"></div><div style="left:47px;top:266.14px;font-size:12px;line-height:16px;color:#fff;font-weight:400;white-space:pre;">Hosts</div><div style="left:24px;top:320px;width:151px;height:1px;background:#002029"></div><div style="left:47px;top:297.14px;font-size:12px;line-height:16px;color:#fff;font-weight:400;white-space:pre;">Overview</div><div style="left:24px;top:321px;width:151px;height:30px;background:#082842"></div><div style="left:24px;top:321px;width:3px;height:30px;background:#7BCBF7"></div><div style="left:24px;top:351px;width:151px;height:1px;background:#002029"></div><div style="left:47px;top:328.14px;font-size:12px;line-height:16px;color:#fff;font-weight:400;white-space:pre;">Latest data</div><div style="left:24px;top:382px;width:151px;height:1px;background:#002029"></div><div style="left:47px;top:359.14px;font-size:12px;line-height:16px;color:#fff;font-weight:400;white-space:pre;">Screens</div><div style="left:24px;top:413px;width:151px;height:1px;background:#002029"></div><div style="left:47px;top:390.14px;font-size:12px;line-height:16px;color:#fff;font-weight:400;white-space:pre;">Maps</div><div style="left:24px;top:444px;width:151px;height:1px;background:#002029"></div><div style="left:47px;top:421.14px;font-size:12px;line-height:16px;color:#fff;font-weight:400;white-space:pre;">Discovery</div><div style="left:47px;top:452.14px;font-size:12px;line-height:16px;color:#fff;font-weight:400;white-space:pre;">Services</div><div style="left:24px;top:470px;width:151px;height:5px;background:linear-gradient(180deg,#08344A,#082439)"></div><div style="left:47px;top:486.35px;font-size:14px;line-height:18px;color:#fff;font-weight:400;white-space:pre;">Inventory</div><svg style="left:154px;top:494.7px" width="8" height="6" viewBox="0 0 8 6"><path d="M1 1l3 3.200L7 1" fill="none" stroke="#BDD3E7" stroke-width="1.300"/></svg><div style="left:47px;top:526.35px;font-size:14px;line-height:18px;color:#fff;font-weight:400;white-space:pre;">Reports</div><svg style="left:154px;top:534.7px" width="8" height="6" viewBox="0 0 8 6"><path d="M1 1l3 3.200L7 1" fill="none" stroke="#BDD3E7" stroke-width="1.300"/></svg><div style="left:47px;top:565.95px;font-size:14px;line-height:18px;color:#fff;font-weight:400;white-space:pre;">Configuration</div><svg style="left:154px;top:574.3px" width="8" height="6" viewBox="0 0 8 6"><path d="M1 1l3 3.200L7 1" fill="none" stroke="#BDD3E7" stroke-width="1.300"/></svg><svg style="left:15px;top:489px" width="18" height="12" viewBox="0 0 18 12"><g fill="#8CAECE"><rect x="0" y="0" width="2" height="2"/><rect x="0" y="4" width="2" height="2"/><rect x="0" y="8" width="2" height="2"/><rect x="4" y="0" width="14" height="2"/><rect x="4" y="4" width="14" height="2"/><rect x="4" y="8" width="14" height="2"/></g></svg><svg style="left:15px;top:525px" width="18" height="18" viewBox="0 0 18 18"><rect width="18" height="18" rx="2" fill="#8CAECE"/><g fill="#08456B"><rect x="4" y="8" width="2" height="6"/><rect x="8" y="4" width="2" height="10"/><rect x="12" y="9.500" width="2" height="4.500"/></g></svg><svg style="left:15px;top:565px" width="18" height="18" viewBox="0 0 18 18"><path d="M17.600 15.100L10.300 7.800c.72-1.850.32-4-1.200-5.530C7.500.670 5.100.350 3.170 1.230L6.600 4.700 4.200 7.100.650 3.650C-.300 5.570.100 7.980 1.700 9.580c1.520 1.520 3.700 1.920 5.530 1.200l7.300 7.300c.32.320.800.320 1.120 0l1.850-1.850c.400-.320.400-.880.100-1.130z" fill="#8CAECE"/></svg><div style="left:48px;top:659.54px;font-size:12px;line-height:16px;color:#E7EFF7;font-weight:400;white-space:pre;">Support</div><div style="left:48px;top:699.54px;font-size:12px;line-height:16px;color:#E7EFF7;font-weight:400;white-space:pre;">Share</div><div style="left:48px;top:739.54px;font-size:12px;line-height:16px;color:#E7EFF7;font-weight:400;white-space:pre;">Help</div><div style="left:48px;top:779.54px;font-size:12px;line-height:16px;color:#E7EFF7;font-weight:400;white-space:pre;">User settings</div><div style="left:48px;top:819.54px;font-size:12px;line-height:16px;color:#E7EFF7;font-weight:400;white-space:pre;">Sign out</div><svg style="left:17px;top:660px" width="14" height="14" viewBox="0 0 14 14"><path d="M2 8V6.500a5 5 0 0 1 10 0V8" fill="none" stroke="#C6DBE7" stroke-width="1.400"/><rect x="1.300" y="6.500" width="2.600" height="4" rx="0.800" fill="#C6DBE7"/><rect x="10.100" y="6.500" width="2.600" height="4" rx="0.800" fill="#C6DBE7"/><path d="M11.500 10.500c0 1.800-1.500 2.500-3.500 2.500" fill="none" stroke="#C6DBE7" stroke-width="1.200"/></svg><svg style="left:18px;top:701px" width="12" height="12" viewBox="0 0 12 12"><rect width="12" height="12" rx="1" fill="#C6DBE7"/><path d="M3.200 2.800h5.700v1.300L5.300 7.900h3.700v1.400H3.100V8L6.700 4.200H3.200z" fill="#08456B"/></svg><div style="left:19.5px;top:737.80px;font-size:15px;line-height:20px;color:#C6DBE7;font-weight:400;white-space:pre;">?</div><svg style="left:17px;top:780px" width="14" height="14" viewBox="0 0 14 14"><circle cx="7" cy="3.700" r="3" fill="#C6DBE7"/><path d="M0.800 13c0-3.300 3-4.800 6.200-4.800s6.200 1.500 6.200 4.800z" fill="#C6DBE7"/></svg><svg style="left:17px;top:820px" width="14" height="14" viewBox="0 0 14 14"><path d="M4.300 3A5.300 5.300 0 1 0 9.700 3" fill="none" stroke="#C6DBE7" stroke-width="1.400"/><path d="M7 0.500v6" stroke="#C6DBE7" stroke-width="1.400"/></svg><div style="left:0px;top:0px;width:1600px;height:34px;background:#63CBEF"></div><svg style="left:16.0px;top:9px" width="17" height="16" viewBox="0 0 17 16"><path d="M-0.200 1.800H11C14.300 1.800 16.400 4.800 16.400 8.300C16.400 12.200 13.500 15.100 10 15.100C7.600 15.100 6.200 14.200 5.200 12.300z" fill="#00FF00"/></svg><div style="left:40.0px;top:9px;width:19.5px;height:18px;overflow:hidden;font-size:12px;line-height:16px;color:#182429;white-space:pre">mfs<div style="right:0;top:0;width:7px;height:18px;background:linear-gradient(90deg,rgba(103,203,239,0),#63CBEF)"></div></div><div style="left:67px;top:8px;width:1px;height:19px;background:#396D84"></div><svg style="left:75.0px;top:9px" width="17" height="17" viewBox="0 0 17 17"><defs><linearGradient id="gf" gradientUnits="userSpaceOnUse" x1="6" y1="16" x2="9" y2="0"><stop offset="0" stop-color="#FFD22E"/><stop offset="0.450" stop-color="#FB9A20"/><stop offset="1" stop-color="#FA4E1C"/></linearGradient></defs><path d="M7.93 0.41L10.15 2.64L13.21 2.39L13.28 5.62L15.61 7.72L13.49 10.05L13.72 13.27L10.66 13.34L8.67 15.79L6.45 13.56L3.39 13.81L3.32 10.58L0.99 8.48L3.11 6.15L2.88 2.93L5.94 2.86z" fill="url(#gf)" stroke="url(#gf)" stroke-width="1.100" stroke-linejoin="round"/><circle cx="9.400" cy="8.100" r="4.600" fill="#63CBEF"/><circle cx="10" cy="8.600" r="3.250" fill="url(#gf)"/><path d="M11.500 9L15.300 12L14.800 7.300z" fill="url(#gf)"/><circle cx="9.800" cy="8.900" r="2" fill="#63CBEF"/><circle cx="9.300" cy="9.700" r="0.800" fill="url(#gf)"/></svg><div style="left:99.0px;top:9px;width:19.5px;height:18px;overflow:hidden;font-size:12px;line-height:16px;color:#182429;white-space:pre">Mem<div style="right:0;top:0;width:7px;height:18px;background:linear-gradient(90deg,rgba(103,203,239,0),#63CBEF)"></div></div><div style="left:126px;top:8px;width:1px;height:19px;background:#396D84"></div><svg style="left:134.0px;top:9px" width="17" height="17" viewBox="0 0 17 17"><defs><linearGradient id="gf" gradientUnits="userSpaceOnUse" x1="6" y1="16" x2="9" y2="0"><stop offset="0" stop-color="#FFD22E"/><stop offset="0.450" stop-color="#FB9A20"/><stop offset="1" stop-color="#FA4E1C"/></linearGradient></defs><path d="M7.93 0.41L10.15 2.64L13.21 2.39L13.28 5.62L15.61 7.72L13.49 10.05L13.72 13.27L10.66 13.34L8.67 15.79L6.45 13.56L3.39 13.81L3.32 10.58L0.99 8.48L3.11 6.15L2.88 2.93L5.94 2.86z" fill="url(#gf)" stroke="url(#gf)" stroke-width="1.100" stroke-linejoin="round"/><circle cx="9.400" cy="8.100" r="4.600" fill="#63CBEF"/><circle cx="10" cy="8.600" r="3.250" fill="url(#gf)"/><path d="M11.500 9L15.300 12L14.800 7.300z" fill="url(#gf)"/><circle cx="9.800" cy="8.900" r="2" fill="#63CBEF"/><circle cx="9.300" cy="9.700" r="0.800" fill="url(#gf)"/></svg><div style="left:158.0px;top:9px;width:19.5px;height:18px;overflow:hidden;font-size:12px;line-height:16px;color:#182429;white-space:pre">Part<div style="right:0;top:0;width:7px;height:18px;background:linear-gradient(90deg,rgba(103,203,239,0),#63CBEF)"></div></div><div style="left:185px;top:8px;width:1px;height:19px;background:#396D84"></div><svg style="left:193.0px;top:9px" width="17" height="16" viewBox="0 0 17 16"><path d="M-0.200 1.800H11C14.300 1.800 16.400 4.800 16.400 8.300C16.400 12.200 13.500 15.100 10 15.100C7.600 15.100 6.200 14.200 5.200 12.300z" fill="#00FF00"/></svg><div style="left:217.0px;top:9px;width:19.5px;height:18px;overflow:hidden;font-size:12px;line-height:16px;color:#182429;white-space:pre">r1z1<div style="right:0;top:0;width:7px;height:18px;background:linear-gradient(90deg,rgba(103,203,239,0),#63CBEF)"></div></div><div style="left:244px;top:8px;width:1px;height:19px;background:#396D84"></div><svg style="left:252.0px;top:9px" width="16" height="16" viewBox="0 0 16 16"><rect width="16" height="16" fill="#A52818"/><g fill="none" stroke="#fff" stroke-width="1.500"><rect x="2.300" y="5.900" width="3.400" height="4.200" rx="0.300"/><rect x="7.700" y="5.900" width="3.400" height="4.200" rx="0.300"/></g><rect x="12.600" y="9.200" width="1.700" height="1.700" fill="#fff"/></svg><div style="left:276.0px;top:9px;width:19.5px;height:18px;overflow:hidden;font-size:12px;line-height:16px;color:#182429;white-space:pre">Leno<div style="right:0;top:0;width:7px;height:18px;background:linear-gradient(90deg,rgba(103,203,239,0),#63CBEF)"></div></div><div style="left:303px;top:8px;width:1px;height:19px;background:#396D84"></div><svg style="left:311.0px;top:9px" width="16" height="16" viewBox="0 0 16 16"><path d="M6.300 2h3.400v4.600h2.800L8 11.200 3.500 6.600h2.800z" fill="#1871EF"/><rect x="3.300" y="12.600" width="9.400" height="1.700" fill="#1871EF"/></svg><div style="left:335.0px;top:9px;width:19.5px;height:18px;overflow:hidden;font-size:12px;line-height:16px;color:#182429;white-space:pre">Dow<div style="right:0;top:0;width:7px;height:18px;background:linear-gradient(90deg,rgba(103,203,239,0),#63CBEF)"></div></div><div style="left:362px;top:8px;width:1px;height:19px;background:#396D84"></div><svg style="left:370.0px;top:9px" width="16" height="16" viewBox="0 0 16 16"><rect width="16" height="16" fill="#737573"/><g fill="none" stroke="#fff" stroke-width="1.500"><rect x="2.300" y="5.900" width="3.400" height="4.200" rx="0.300"/><rect x="7.700" y="5.900" width="3.400" height="4.200" rx="0.300"/></g><rect x="12.600" y="9.200" width="1.700" height="1.700" fill="#fff"/></svg><div style="left:394.0px;top:9px;width:19.5px;height:18px;overflow:hidden;font-size:12px;line-height:16px;color:#182429;white-space:pre">10.1<div style="right:0;top:0;width:7px;height:18px;background:linear-gradient(90deg,rgba(103,203,239,0),#63CBEF)"></div></div><div style="left:421px;top:8px;width:1px;height:19px;background:#396D84"></div><svg style="left:429.0px;top:9px" width="16" height="16" viewBox="0 0 16 16"><rect width="16" height="16" fill="#D60000"/><path d="M4.2 3.6h7.6v1.7L6.9 10.6h5v1.9H4.1v-1.7L9 5.5H4.2z" fill="#fff"/></svg><div style="left:453.0px;top:9px;width:19.5px;height:18px;overflow:hidden;font-size:12px;line-height:16px;color:#182429;white-space:pre">Late<div style="right:0;top:0;width:7px;height:18px;background:linear-gradient(90deg,rgba(103,203,239,0),#63CBEF)"></div></div><div style="left:480px;top:8px;width:1px;height:19px;background:#396D84"></div><svg style="left:488.0px;top:9px" width="16" height="16" viewBox="0 0 16 16"><rect width="16" height="16" fill="#D60000"/><path d="M4.2 3.6h7.6v1.7L6.9 10.6h5v1.9H4.1v-1.7L9 5.5H4.2z" fill="#fff"/></svg><div style="left:512.0px;top:9px;width:19.5px;height:18px;overflow:hidden;font-size:12px;line-height:16px;color:#182429;white-space:pre">Hist<div style="right:0;top:0;width:7px;height:18px;background:linear-gradient(90deg,rgba(103,203,239,0),#63CBEF)"></div></div><div style="left:539px;top:8px;width:1px;height:19px;background:#396D84"></div><svg style="left:547.0px;top:9px" width="16" height="16" viewBox="0 0 16 16"><rect width="16" height="16" fill="#D60000"/><path d="M4.2 3.6h7.6v1.7L6.9 10.6h5v1.9H4.1v-1.7L9 5.5H4.2z" fill="#fff"/></svg><div style="left:571.0px;top:9px;width:19.5px;height:18px;overflow:hidden;font-size:12px;line-height:16px;color:#182429;white-space:pre">Hist<div style="right:0;top:0;width:7px;height:18px;background:linear-gradient(90deg,rgba(103,203,239,0),#63CBEF)"></div></div><div style="left:598px;top:8px;width:1px;height:19px;background:#396D84"></div><svg style="left:606.0px;top:9px" width="16" height="16" viewBox="0 0 16 16"><rect width="16" height="16" fill="#D60000"/><path d="M4.2 3.6h7.6v1.7L6.9 10.6h5v1.9H4.1v-1.7L9 5.5H4.2z" fill="#fff"/></svg><div style="left:630.0px;top:9px;width:19.5px;height:18px;overflow:hidden;font-size:12px;line-height:16px;color:#182429;white-space:pre">Hist<div style="right:0;top:0;width:7px;height:18px;background:linear-gradient(90deg,rgba(103,203,239,0),#63CBEF)"></div></div><svg style="left:648.4px;top:0" width="75" height="34" viewBox="0 0 75 34"><path d="M0 34 C5 34 8 31 8 26 V8 C8 3 11 0 16 0 H59 C64 0 67 3 67 8 V26 C67 31 70 34 75 34z" fill="#fff"/></svg><svg style="left:664.0px;top:9px" width="16" height="16" viewBox="0 0 16 16"><rect width="16" height="16" fill="#D60000"/><path d="M4.2 3.6h7.6v1.7L6.9 10.6h5v1.9H4.1v-1.7L9 5.5H4.2z" fill="#fff"/></svg><svg style="left:693.2px;top:11px" width="12" height="12" viewBox="0 0 12 12"><path d="M2.200 2.200l7.600 7.600M9.800 2.200l-7.600 7.600" stroke="#3C4043" stroke-width="1.400" fill="none"/></svg><svg style="left:722.0px;top:9px" width="16" height="16" viewBox="0 0 16 16"><rect width="16" height="16" fill="#D60000"/><path d="M4.2 3.6h7.6v1.7L6.9 10.6h5v1.9H4.1v-1.7L9 5.5H4.2z" fill="#fff"/></svg><div style="left:746.0px;top:9px;width:18.5px;height:18px;overflow:hidden;font-size:12px;line-height:16px;color:#182429;white-space:pre">Hist<div style="right:0;top:0;width:7px;height:18px;background:linear-gradient(90deg,rgba(103,203,239,0),#63CBEF)"></div></div><div style="left:772px;top:8px;width:1px;height:19px;background:#396D84"></div><svg style="left:780.0px;top:9px" width="16" height="16" viewBox="0 0 16 16"><rect width="16" height="16" fill="#D60000"/><path d="M4.2 3.6h7.6v1.7L6.9 10.6h5v1.9H4.1v-1.7L9 5.5H4.2z" fill="#fff"/></svg><div style="left:804.0px;top:9px;width:18.5px;height:18px;overflow:hidden;font-size:12px;line-height:16px;color:#182429;white-space:pre">Hist<div style="right:0;top:0;width:7px;height:18px;background:linear-gradient(90deg,rgba(103,203,239,0),#63CBEF)"></div></div><div style="left:830px;top:8px;width:1px;height:19px;background:#396D84"></div><svg style="left:838.0px;top:9px" width="16" height="16" viewBox="0 0 16 16"><rect width="16" height="16" fill="#D60000"/><path d="M4.2 3.6h7.6v1.7L6.9 10.6h5v1.9H4.1v-1.7L9 5.5H4.2z" fill="#fff"/></svg><div style="left:862.0px;top:9px;width:18.5px;height:18px;overflow:hidden;font-size:12px;line-height:16px;color:#182429;white-space:pre">Hist<div style="right:0;top:0;width:7px;height:18px;background:linear-gradient(90deg,rgba(103,203,239,0),#63CBEF)"></div></div><div style="left:888px;top:8px;width:1px;height:19px;background:#396D84"></div><svg style="left:896.0px;top:9px" width="16" height="16" viewBox="0 0 16 16"><rect width="16" height="16" fill="#D60000"/><path d="M4.2 3.6h7.6v1.7L6.9 10.6h5v1.9H4.1v-1.7L9 5.5H4.2z" fill="#fff"/></svg><div style="left:920.0px;top:9px;width:18.5px;height:18px;overflow:hidden;font-size:12px;line-height:16px;color:#182429;white-space:pre">Hist<div style="right:0;top:0;width:7px;height:18px;background:linear-gradient(90deg,rgba(103,203,239,0),#63CBEF)"></div></div><div style="left:946px;top:8px;width:1px;height:19px;background:#396D84"></div><svg style="left:954.0px;top:9px" width="16" height="16" viewBox="0 0 16 16"><rect width="16" height="16" fill="#D60000"/><path d="M4.2 3.6h7.6v1.7L6.9 10.6h5v1.9H4.1v-1.7L9 5.5H4.2z" fill="#fff"/></svg><div style="left:978.0px;top:9px;width:18.5px;height:18px;overflow:hidden;font-size:12px;line-height:16px;color:#182429;white-space:pre">Hist<div style="right:0;top:0;width:7px;height:18px;background:linear-gradient(90deg,rgba(103,203,239,0),#63CBEF)"></div></div><div style="left:1004px;top:8px;width:1px;height:19px;background:#396D84"></div><svg style="left:1012.0px;top:9px" width="16" height="16" viewBox="0 0 16 16"><rect width="16" height="16" fill="#D60000"/><path d="M4.2 3.6h7.6v1.7L6.9 10.6h5v1.9H4.1v-1.7L9 5.5H4.2z" fill="#fff"/></svg><div style="left:1036.0px;top:9px;width:18.5px;height:18px;overflow:hidden;font-size:12px;line-height:16px;color:#182429;white-space:pre">Hist<div style="right:0;top:0;width:7px;height:18px;background:linear-gradient(90deg,rgba(103,203,239,0),#63CBEF)"></div></div><div style="left:1062px;top:8px;width:1px;height:19px;background:#396D84"></div><svg style="left:1070.0px;top:9px" width="16" height="16" viewBox="0 0 16 16"><rect width="16" height="16" fill="#D60000"/><path d="M4.2 3.6h7.6v1.7L6.9 10.6h5v1.9H4.1v-1.7L9 5.5H4.2z" fill="#fff"/></svg><div style="left:1094.0px;top:9px;width:18.5px;height:18px;overflow:hidden;font-size:12px;line-height:16px;color:#182429;white-space:pre">Hist<div style="right:0;top:0;width:7px;height:18px;background:linear-gradient(90deg,rgba(103,203,239,0),#63CBEF)"></div></div><div style="left:1120px;top:8px;width:1px;height:19px;background:#396D84"></div><svg style="left:1128.0px;top:9px" width="16" height="16" viewBox="0 0 16 16"><rect width="16" height="16" fill="#D60000"/><path d="M4.2 3.6h7.6v1.7L6.9 10.6h5v1.9H4.1v-1.7L9 5.5H4.2z" fill="#fff"/></svg><div style="left:1152.0px;top:9px;width:18.5px;height:18px;overflow:hidden;font-size:12px;line-height:16px;color:#182429;white-space:pre">Hist<div style="right:0;top:0;width:7px;height:18px;background:linear-gradient(90deg,rgba(103,203,239,0),#63CBEF)"></div></div><div style="left:1178px;top:8px;width:1px;height:19px;background:#396D84"></div><svg style="left:1186.0px;top:9px" width="16" height="16" viewBox="0 0 16 16"><rect width="16" height="16" fill="#D60000"/><path d="M4.2 3.6h7.6v1.7L6.9 10.6h5v1.9H4.1v-1.7L9 5.5H4.2z" fill="#fff"/></svg><div style="left:1210.0px;top:9px;width:18.5px;height:18px;overflow:hidden;font-size:12px;line-height:16px;color:#182429;white-space:pre">Hist<div style="right:0;top:0;width:7px;height:18px;background:linear-gradient(90deg,rgba(103,203,239,0),#63CBEF)"></div></div><div style="left:1236px;top:8px;width:1px;height:19px;background:#396D84"></div><svg style="left:1244.0px;top:9px" width="16" height="16" viewBox="0 0 16 16"><rect width="16" height="16" fill="#D60000"/><path d="M4.2 3.6h7.6v1.7L6.9 10.6h5v1.9H4.1v-1.7L9 5.5H4.2z" fill="#fff"/></svg><div style="left:1268.0px;top:9px;width:18.5px;height:18px;overflow:hidden;font-size:12px;line-height:16px;color:#182429;white-space:pre">Hist<div style="right:0;top:0;width:7px;height:18px;background:linear-gradient(90deg,rgba(103,203,239,0),#63CBEF)"></div></div><div style="left:1294px;top:8px;width:1px;height:19px;background:#396D84"></div><svg style="left:1302.0px;top:9px" width="16" height="16" viewBox="0 0 16 16"><rect width="16" height="16" fill="#D60000"/><path d="M4.2 3.6h7.6v1.7L6.9 10.6h5v1.9H4.1v-1.7L9 5.5H4.2z" fill="#fff"/></svg><div style="left:1326.0px;top:9px;width:18.5px;height:18px;overflow:hidden;font-size:12px;line-height:16px;color:#182429;white-space:pre">Hist<div style="right:0;top:0;width:7px;height:18px;background:linear-gradient(90deg,rgba(103,203,239,0),#63CBEF)"></div></div><div style="left:1352px;top:8px;width:1px;height:19px;background:#396D84"></div><svg style="left:1360.0px;top:9px" width="16" height="16" viewBox="0 0 16 16"><rect width="16" height="16" fill="#D60000"/><path d="M4.2 3.6h7.6v1.7L6.9 10.6h5v1.9H4.1v-1.7L9 5.5H4.2z" fill="#fff"/></svg><div style="left:1384.0px;top:9px;width:18.5px;height:18px;overflow:hidden;font-size:12px;line-height:16px;color:#182429;white-space:pre">Hist<div style="right:0;top:0;width:7px;height:18px;background:linear-gradient(90deg,rgba(103,203,239,0),#63CBEF)"></div></div><div style="left:1410px;top:8px;width:1px;height:19px;background:#396D84"></div><svg style="left:1426px;top:10px" width="14" height="14" viewBox="0 0 14 14"><path d="M7 1v12M1 7h12" stroke="#202124" stroke-width="1.800"/></svg><div style="left:1497px;top:0px;width:101px;height:20px;background:#182C39"></div><div style="left:1498px;top:0px;width:27px;height:19px;background:#63CBEF"></div><div style="left:1526px;top:0px;width:25px;height:19px;background:#63CBEF"></div><div style="left:1552px;top:0px;width:45px;height:19px;background:#C65952"></div><div style="left:1506px;top:10px;width:10px;height:3px;background:#000"></div><svg style="left:1532px;top:3px" width="12" height="12" viewBox="0 0 12 12"><path d="M3.500 3V1h7.500v7.500h-2" fill="none" stroke="#000" stroke-width="1.300"/><rect x="1.500" y="3.800" width="6.700" height="6.700" fill="none" stroke="#000" stroke-width="1.700"/></svg><svg style="left:1569px;top:4px" width="12" height="10" viewBox="0 0 12 10"><path d="M1.500 1l8.500 8M10 1L1.500 9" stroke="#000" stroke-width="2.600"/></svg><div style="left:0px;top:34px;width:1600px;height:36px;background:#fff"></div><div style="left:0px;top:70px;width:1600px;height:1px;background:#CECFD6"></div><svg style="left:14px;top:44px" width="16" height="16" viewBox="0 0 16 16"><path d="M15 8H2.500M8 2L2 8l6 6" fill="none" stroke="#BDBEBD" stroke-width="1.700"/></svg><svg style="left:46px;top:44px" width="16" height="16" viewBox="0 0 16 16"><path d="M1 8h12.500M8 2l6 6-6 6" fill="none" stroke="#BDBEBD" stroke-width="1.700"/></svg><svg style="left:78px;top:43px" width="17" height="17" viewBox="0 0 17 17"><path d="M13.600 5.200A6.200 6.200 0 1 0 14.700 9.500" fill="none" stroke="#5A616B" stroke-width="1.900"/><path d="M15.200 1.500v5.700H9.500z" fill="#5A616B"/></svg><div style="left:108px;top:38px;width:1416px;height:28px;background:#F7F3F7;border-radius:14px"></div><svg style="left:118px;top:44px" width="16" height="16" viewBox="0 0 16 16"><circle cx="8" cy="8" r="6.300" fill="none" stroke="#5A616B" stroke-width="1.400"/><rect x="7.250" y="7" width="1.500" height="4.500" fill="#5A616B"/><rect x="7.250" y="4.300" width="1.500" height="1.600" fill="#5A616B"/></svg><div style="left:142.5px;top:43.15px;font-size:14px;line-height:18px;color:#5A616B;font-weight:400;white-space:pre;">Not secure</div><div style="left:217px;top:44px;width:1px;height:16px;background:#9CA2A5"></div><div style="left:227px;top:43.15px;font-size:14px;line-height:18px;color:#5A616B;font-weight:400;white-space:pre;letter-spacing:-0.030px"><span style="color:#212021">172.30.30.232</span>/zabbix/history.php?action=showgraph&amp;itemids%5B%5D=2717426</div><svg style="left:1498px;top:44px" width="16" height="16" viewBox="0 0 18 18"><path d="M9 2.300l2 4.600 5 .45-3.800 3.300 1.150 4.900L9 12.950 4.650 15.550 5.800 10.650 2 7.350l5-.45z" fill="none" stroke="#5A616B" stroke-width="1.400" stroke-linejoin="round"/></svg><svg style="left:1536px;top:42px" width="20" height="20" viewBox="0 0 20 20"><circle cx="10" cy="10" r="9.300" fill="#5A616B"/><circle cx="10" cy="7.300" r="3.100" fill="#fff"/><path d="M3.800 15.300c1.300-2.300 3.700-3.200 6.200-3.200s4.900.9 6.200 3.200a8 8 0 0 1-12.400 0z" fill="#fff"/></svg><svg style="left:1570px;top:44px" width="16" height="16" viewBox="0 0 16 16"><circle cx="8" cy="8" r="8" fill="#DE3021"/><path d="M8 3.300l4 4.200H9.700v3.700H6.300V7.500H4z" fill="#fff"/></svg><div style="left:649px;top:45px;width:301px;height:55px;background:rgba(40,30,40,0.085)"></div><div style="left:689.5px;top:61.76px;font-size:16px;line-height:21px;color:rgba(255,255,255,0.78);font-weight:400;white-space:pre;letter-spacing:-0.200px">Press</div><div style="left:737px;top:53px;width:37px;height:38px;border:1px solid rgba(255,255,255,0.78);border-radius:3px;box-sizing:border-box"></div><div style="left:743.5px;top:61.76px;font-size:16px;line-height:21px;color:rgba(255,255,255,0.78);font-weight:400;white-space:pre;letter-spacing:-0.800px">Esc</div><div style="left:781.5px;top:61.76px;font-size:16px;line-height:21px;color:rgba(255,255,255,0.78);font-weight:400;white-space:pre;letter-spacing:0.400px">to exit full screen</div><div style="left:0px;top:860px;width:1600px;height:40px;background:#5A5152"></div><div style="left:1px;top:861px;width:1598px;height:38px;background:#63CBEF"></div><svg style="left:10px;top:865px" width="30" height="29" viewBox="-1 -1 30 29"><g fill="#fff" stroke="#4AAACE" stroke-width="0.700"><path d="M0.800 3.500L12 2V13H0.800z"/><path d="M13.200 1.800L27.500 0V13H13.200z"/><path d="M0.800 14.200H12V25.200L0.800 23.700z"/><path d="M13.200 14.200H27.500V27L13.200 25.400z"/></g></svg><svg style="left:65px;top:864px" width="33" height="32" viewBox="0 0 33 32"><rect x="0.700" y="0.700" width="14" height="27" fill="#1886DE" stroke="#fff" stroke-width="1.200"/><rect x="2" y="6" width="11.500" height="1.200" fill="#9FD0F5"/><rect x="12" y="13" width="8" height="5" rx="1.500" fill="none" stroke="#fff" stroke-width="1.400"/><rect x="5.700" y="16.700" width="26" height="14" rx="1.500" fill="#6B8EAD" stroke="#fff" stroke-width="1.300"/><rect x="9" y="21" width="19.500" height="1.300" fill="#fff"/><rect x="10.500" y="19.500" width="1.500" height="4.300" fill="#fff"/><rect x="25.500" y="19.500" width="1.500" height="4.300" fill="#fff"/></svg><svg style="left:129px;top:868px" width="30" height="24" viewBox="0 0 30 24"><defs><linearGradient id="ps" x1="0" y1="0" x2="0" y2="1"><stop offset="0" stop-color="#4A9BE0"/><stop offset="1" stop-color="#1C5FB0"/></linearGradient></defs><path d="M6.500 1H28.500c.8 0 1.200.5 1 1.300L25.300 21.700c-.2.800-.8 1.300-1.600 1.300H1.500c-.8 0-1.200-.5-1-1.300L4.800 2.300C5 1.500 5.700 1 6.500 1z" fill="url(#ps)" stroke="#8CC3EF" stroke-width="0.800"/><path d="M8.500 5.500l8 6.300-10 6.700" fill="none" stroke="#fff" stroke-width="2.300" stroke-linejoin="round"/><rect x="14.500" y="17" width="7" height="2" fill="#fff"/></svg><svg style="left:189px;top:866px" width="33" height="30" viewBox="0 0 33 30"><path d="M1 3.500h9l2 2h11v3H1z" fill="#EFC35A"/><rect x="4.500" y="1.300" width="3" height="2.200" fill="#2FB82F"/><rect x="12.500" y="2.600" width="3" height="2" fill="#D9342B"/><rect x="21" y="5.300" width="3.500" height="2" fill="#2D7BE0"/><path d="M1 8h9.500l2-2H31.500c.6 0 1 .4 1 1V25H1z" fill="#F7D77B" stroke="#DEB24A" stroke-width="0.800"/><path d="M5.500 29V19.500c0-1 .7-1.700 1.700-1.700H25.800c1 0 1.700.7 1.700 1.700V29h-5v-5.500h-12V29z" fill="#8CCBF7" stroke="#4A92CE" stroke-width="0.900"/><path d="M8 14.500l1.200 2.300 2.300 1.200-2.300 1.200L8 21.500l-1.200-2.300-2.300-1.200 2.300-1.200z" fill="#fff"/></svg><svg style="left:252px;top:865px" width="30" height="30" viewBox="0 0 30 30"><rect width="30" height="30" fill="#008A00"/><path d="M5.500 9.500H24.500L22.700 24.500H7.300z" fill="#fff"/><path d="M10.500 9.500c0-6 9-6 9 0" fill="none" stroke="#fff" stroke-width="1.500"/><g fill="#008A00"><path d="M10 13.300l4.300-.6v3.800H10z"/><path d="M15.300 12.600l5-.7v4.600h-5z"/><path d="M10 17.500h4.300v3.800L10 20.700z"/><path d="M15.300 17.500h5v4.600l-5-.7z"/></g></svg><div style="left:299px;top:861px;width:60px;height:38px;background:#A5DFF7;border-left:1px solid #294552;border-right:1px solid #294552;box-sizing:border-box"></div><svg style="left:313px;top:864px" width="32" height="32" viewBox="0 0 32 32"><circle cx="16" cy="16" r="15" fill="#fff"/><path d="M16 16L3 8.500A15 15 0 0 1 29 8.500z" fill="#DB4437"/><path d="M16 16L29 8.500A15 15 0 0 1 16 31z" fill="#FFCD40"/><path d="M16 16L16 31A15 15 0 0 1 3 8.500z" fill="#0F9D58"/><path d="M16 9.200H28.600A15 15 0 0 0 3 8.500L9.800 19.500z" fill="#DB4437"/><path d="M22 19.500L16 31A15 15 0 0 0 28.600 9.200H16z" fill="#FFCD40"/><path d="M10 19.500L3 8.500A15 15 0 0 0 16 31L22 19.500z" fill="#0F9D58"/><circle cx="16" cy="16" r="6.800" fill="#fff"/><circle cx="16" cy="16" r="5.400" fill="#4285F4"/></svg><svg style="left:1410px;top:871px" width="18" height="18" viewBox="0 0 18 18"><rect x="1.300" y="0.800" width="2" height="15.500" fill="#fff" stroke="#394952" stroke-width="0.600"/><path d="M3.300 2c3-1.500 5 1.500 9 0v7c-4 1.500-6-1.500-9 0z" fill="#fff" stroke="#394952" stroke-width="0.700"/><circle cx="12.500" cy="12.500" r="4.300" fill="#E73831"/><path d="M10.700 10.700l3.600 3.600M14.300 10.700l-3.600 3.600" stroke="#fff" stroke-width="1.300"/></svg><svg style="left:1435px;top:871px" width="17" height="18" viewBox="0 0 17 18"><rect x="5" y="2" width="10" height="9" fill="none" stroke="#394952" stroke-width="2"/><rect x="5" y="2" width="10" height="9" fill="none" stroke="#fff" stroke-width="1"/><rect x="1" y="1" width="4.500" height="6" rx="1.500" fill="#fff" stroke="#394952" stroke-width="0.800"/><circle cx="3.250" cy="3.300" r="1" fill="#394952"/><rect x="2.400" y="7" width="1.800" height="8.500" fill="#fff" stroke="#394952" stroke-width="0.600"/><rect x="4.200" y="12.300" width="5" height="1.600" fill="#fff" stroke="#394952" stroke-width="0.600"/><path d="M11.500 8.500l4.800 8.300H6.700z" fill="#F7C718"/><rect x="11" y="11.500" width="1.100" height="3" fill="#222"/><rect x="11" y="15" width="1.100" height="1" fill="#222"/></svg><svg style="left:1458px;top:871px" width="18" height="18" viewBox="0 0 18 18"><path d="M1.500 6.500H4l4-4v13l-4-4H1.500z" fill="#fff" stroke="#394952" stroke-width="0.800"/><circle cx="12.500" cy="12.500" r="4.300" fill="#E73831"/><path d="M10.700 10.700l3.600 3.600M14.300 10.700l-3.600 3.600" stroke="#fff" stroke-width="1.300"/></svg><div style="left:1489.3px;top:873.38px;font-size:11.3px;line-height:15px;color:#081010;font-weight:400;white-space:pre;letter-spacing:-0.350px">ENG</div><div style="left:1528.5px;top:863.88px;font-size:11.3px;line-height:15px;color:#081010;font-weight:400;white-space:pre;letter-spacing:-0.450px">03:41</div><svg style="left:1528px;top:862px" width="56" height="36" viewBox="0 0 56 36"><g fill="none" stroke="#081010" stroke-width="1.050" stroke-linecap="round"><path d="M31 12.800H42"/><path d="M34.600 5V12.800"/><path d="M34.600 12.800C35.500 10 38 8.800 39.800 9.300C41.800 10 41.800 12.300 39.500 12.800"/><path d="M52.300 8.300C52.800 11.500 52 12.800 49.500 12.800H48.500C46.500 12.800 45.800 12 46.200 10.300"/><path d="M3 22.800V30.600M3 24.500C3.300 26.300 7.300 26.500 7.800 22.800"/><path d="M13 22.800V30.600M13 24.500C13.300 26.300 17.300 26.500 17.800 22.800"/><path d="M20 22.800V30.600M20 24.500C20.300 26.300 24.300 26.500 24.800 22.800"/><path d="M31.200 22L26.800 32"/><path d="M36.500 22.800V30.600"/><path d="M42.800 22L38.400 32"/><path d="M47.500 22.800V30.600M47.500 26.300C49 21.500 53.500 23 50.800 25.600C50 26.300 51.500 26.800 52.300 26.300"/></g><g fill="#081010"><circle cx="38.600" cy="6.600" r="0.800"/><circle cx="43.900" cy="12.400" r="0.750"/><circle cx="49.300" cy="16.400" r="0.800"/><path d="M10.400 25.400l1.200 1.400-1.200 1.400-1.200-1.400z"/><path d="M33.500 25.400l1.200 1.400-1.200 1.400-1.200-1.400z"/><path d="M45.100 25.400l1.200 1.400-1.200 1.400-1.200-1.400z"/></g></svg><svg style="left:1180px;top:428px" width="22" height="30" viewBox="0 0 22 30"><path d="M3 2.500V20.300L7 17L10.300 24.300L14.300 22.700L11.300 15.800L15.500 15.300z" fill="rgba(0,0,0,0.220)" transform="translate(1.600 1.400)"/><path d="M3 2.500V20.300L7 17L10.300 24.300L14.300 22.700L11.300 15.800L15.500 15.300z" fill="#4A4D4A" stroke="#fff" stroke-width="1.300" stroke-linejoin="miter"/></svg></body></html>
